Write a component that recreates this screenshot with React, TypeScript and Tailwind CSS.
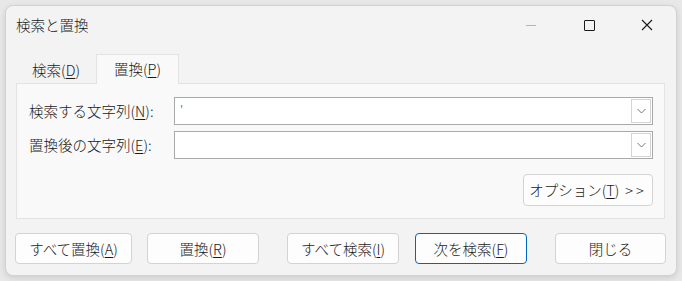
import { useState } from "react";

const font = { fontFamily: '"Noto Sans CJK JP", "Noto Sans", sans-serif' };

function Key({ k }: { k: string }) {
  return <span className="underline underline-offset-2 decoration-1">{k}</span>;
}

function Combo({ value }: { value: string }) {
  return (
    <div className="flex h-[28px] w-[479px] border border-[#a9a9a9] bg-white">
      <div className="flex-1 pl-[5px] text-[13px] leading-[24px] text-[#555]">{value}</div>
      <div className="m-[1px] flex w-[20px] items-center justify-center border border-[#d4d4d4] bg-white">
        <svg width="9" height="6" viewBox="0 0 9 6" fill="none">
          <path d="M0.5 1 L4.5 5 L8.5 1" stroke="#777" strokeWidth="1" />
        </svg>
      </div>
    </div>
  );
}

function Btn({ children, w, ml, focus }: { children: React.ReactNode; w: string; ml: string; focus?: boolean }) {
  return (
    <button
      className={
        "flex h-[31px] items-center justify-center rounded-[4px] border bg-[#fdfdfd] text-[14.5px] font-light text-[#1a1a1a] " +
        w + " " + ml + " " +
        (focus ? "border-[#0067c0]" : "border-[#d3d3d3]")
      }
    >
      {children}
    </button>
  );
}

export default function App() {
  const [tab] = useState<"find" | "replace">("replace");

  return (
    <div className="h-[281px] w-[682px] overflow-hidden bg-[#e8e8e8] pl-[5px] pt-[5px] font-light" style={font}>
      <div className="h-[271px] w-[672px] rounded-[8px] border border-[#d2d2d2] bg-[#f3f3f3] shadow-[0_2px_6px_rgba(0,0,0,0.12)] text-[#1a1a1a]">
        {/* title bar */}
        <div className="flex h-[38px] items-center">
          <div className="flex-1 pl-[10px] text-[14.5px] leading-none">検索と置換</div>
          <div className="flex h-full">
            <div className="flex w-[58px] items-center justify-center">
              <div className="h-[1px] w-[10px] bg-[#b5b5b5]" />
            </div>
            <div className="flex w-[58px] items-center justify-center">
              <div className="h-[11px] w-[11px] rounded-[1px] border border-[#1a1a1a]" />
            </div>
            <div className="flex w-[58px] items-center justify-center">
              <svg width="12" height="12" viewBox="0 0 12 12">
                <path d="M1 1 L11 11 M11 1 L1 11" stroke="#1a1a1a" strokeWidth="1.1" />
              </svg>
            </div>
          </div>
        </div>

        {/* tabs */}
        <div className="mt-[10px] flex h-[29px] items-end pl-[10px]">
          <div className="flex h-[25px] w-[80px] items-center justify-center text-[14.5px] leading-none">
            検索(<Key k="D" />)
          </div>
          <div
            className={
              "relative z-10 -mb-[1px] flex h-[30px] w-[83px] items-center justify-center border border-b-0 border-[#e3e3e3] text-[14.5px] leading-none " +
              (tab === "replace" ? "bg-[#f9f9f9]" : "bg-[#f3f3f3]")
            }
          >
            置換(<Key k="P" />)
          </div>
        </div>

        {/* panel */}
        <div className="ml-[10px] flex h-[136px] w-[649px] flex-col border border-[#e3e3e3] bg-[#f9f9f9] pl-[12px] pr-[11px] pt-[13px]">
          <div className="flex h-[28px] items-center justify-between">
            <span className="text-[14.5px] leading-none">検索する文字列(<Key k="N" />):</span>
            <Combo value="'" />
          </div>
          <div className="mt-[6px] flex h-[28px] items-center justify-between">
            <span className="text-[14.5px] leading-none">置換後の文字列(<Key k="E" />):</span>
            <Combo value="" />
          </div>
          <div className="mt-[15px] flex justify-end">
            <button className="flex h-[32px] w-[130px] items-center justify-center rounded-[4px] border border-[#d3d3d3] bg-[#fdfdfd] text-[14.5px] font-light">
              オプション(<Key k="T" />)<span className="ml-[6px] tracking-[3px]">&gt;&gt;</span>
            </button>
          </div>
        </div>

        {/* buttons */}
        <div className="mt-[14px] flex pl-[9px]">
          <Btn w="w-[117px]" ml="ml-0">すべて置換(<Key k="A" />)</Btn>
          <Btn w="w-[112px]" ml="ml-[15px]">置換(<Key k="R" />)</Btn>
          <Btn w="w-[112px]" ml="ml-[28px]">すべて検索(<Key k="I" />)</Btn>
          <Btn w="w-[112px]" ml="ml-[16px]" focus>次を検索(<Key k="F" />)</Btn>
          <Btn w="w-[111px]" ml="ml-[28px]">閉じる</Btn>
        </div>
      </div>
    </div>
  );
}
